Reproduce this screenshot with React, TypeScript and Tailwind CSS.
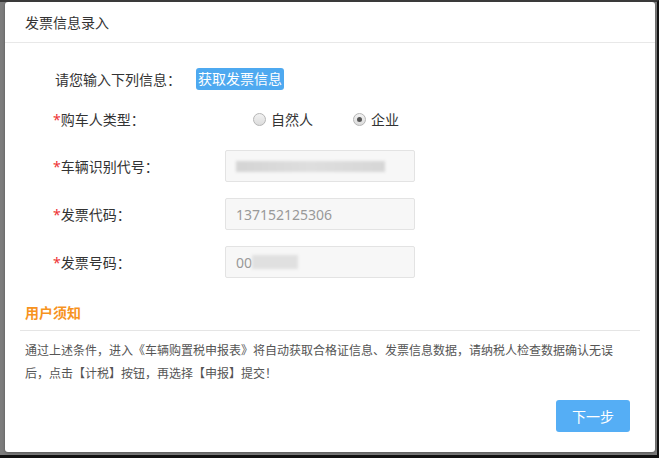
import React from "react";

const font = { fontFamily: '"Noto Sans", "Noto Sans CJK SC", sans-serif' };

function Radio({ checked, label }: { checked?: boolean; label: string }) {
  return (
    <label className="flex items-center gap-[5px] text-[14px] text-[#333]">
      <span className="flex h-[13px] w-[13px] items-center justify-center rounded-full border border-[#b5b5b5] bg-gradient-to-b from-[#f2f2f2] to-[#dcdcdc]">
        {checked && <span className="h-[5px] w-[5px] rounded-full bg-[#555]" />}
      </span>
      {label}
    </label>
  );
}

function Field({ label, children }: { label: string; children: React.ReactNode }) {
  return (
    <div className="flex items-center">
      <div className="w-[172px] text-[14px] text-[#333]">
        <span className="text-[#e33]">*</span>
        {label}
      </div>
      <div className="flex h-[32px] w-[190px] items-center rounded-[2px] border border-[#e3e3e3] bg-[#f7f7f7] px-[10px] text-[14px] text-[#999]">
        {children}
      </div>
    </div>
  );
}

export default function App() {
  return (
    <div
      className="h-[458px] w-[659px] overflow-hidden border-t-2 border-r-2 border-b-[3px] border-t-[#3a3a3a] border-r-[#111] border-b-[#111] bg-[#7c7c7c] pl-[5px] pr-[2px] pb-[3px]"
      style={font}
    >
      <div className="flex h-full w-full flex-col rounded-[3px] bg-white shadow-[0_1px_3px_rgba(0,0,0,0.3)]">
        {/* header */}
        <div className="flex h-[41px] items-center border-b border-[#e8e8e8] px-[20px] pt-[1px] text-[14px] text-[#333]">
          发票信息录入
        </div>

        {/* form */}
        <div className="pl-[48px]">
          <div className="mt-[25px] flex h-[22px] items-center">
            <span className="ml-[2px] w-[141px] text-[14px] text-[#333]">请您输入下列信息：</span>
            <button className="h-[22px] rounded-[3px] bg-[#4ea9f0] px-[2px] text-[14px] leading-[22px] text-white">
              获取发票信息
            </button>
          </div>

          <div className="mt-[18px] flex h-[22px] items-center">
            <div className="w-[172px] text-[14px] text-[#333]">
              <span className="text-[#e33]">*</span>
              购车人类型：
            </div>
            <div className="ml-[28px] flex gap-[40px]">
              <Radio label="自然人" />
              <Radio label="企业" checked />
            </div>
          </div>

          <div className="mt-[20px] flex flex-col gap-[16px]">
            <Field label="车辆识别代号：">
              <span className="h-[11px] w-[149px] bg-gradient-to-r from-[#d4d4d4] via-[#dedede] to-[#d6d6d6] blur-[1.5px]" />
            </Field>
            <Field label="发票代码：">137152125306</Field>
            <Field label="发票号码：">
              <span>00</span>
              <span className="h-[14px] w-[46px] bg-[#e0e0e0] blur-[1.5px]" />
            </Field>
          </div>
        </div>

        {/* notice */}
        <div className="mt-[24px] px-[15px]">
          <div className="border-b border-[#e5e5e5] px-[5px] pb-[7px] text-[14px] font-bold text-[#f7931e]">
            用户须知
          </div>
          <p className="mt-[8px] w-[600px] px-[5px] text-[12px] leading-[23px] text-[#555]">
            通过上述条件，进入《车辆购置税申报表》将自动获取合格证信息、发票信息数据，请纳税人检查数据确认无误后，点击【计税】按钮，再选择【申报】提交！
          </p>
        </div>

        <div className="mt-auto mb-[20px] flex justify-end pr-[25px]">
          <button className="h-[32px] w-[74px] rounded-[3px] bg-[#55aef5] text-[14px] text-white">
            下一步
          </button>
        </div>
      </div>
    </div>
  );
}
